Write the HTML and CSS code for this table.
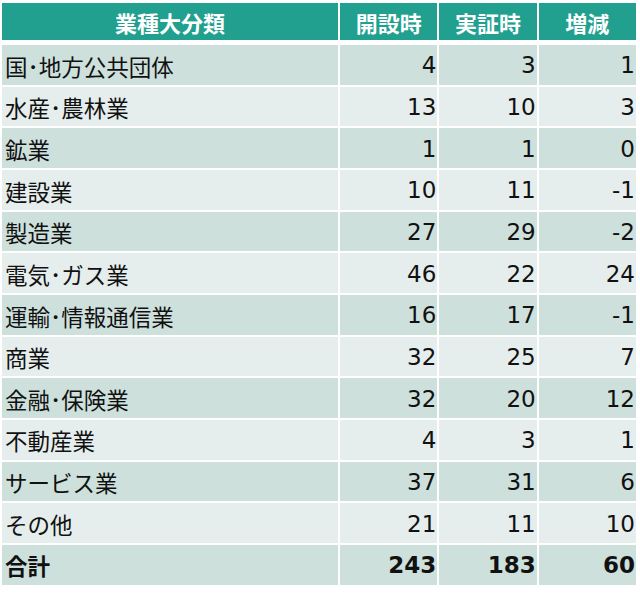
FILE: index.html
```html
<!DOCTYPE html>
<html lang="ja">
<head>
<meta charset="utf-8">
<link rel="stylesheet" href="styles.css">
</head>
<body>
<table class="tbl">
  <thead>
    <tr><th class="c1">業種大分類</th><th class="cn">開設時</th><th class="cn">実証時</th><th class="cn">増減</th></tr>
  </thead>
  <tbody>
    <tr class="odd"><td class="name">国･地方公共団体</td><td class="num">4</td><td class="num">3</td><td class="num">1</td></tr>
    <tr class="even"><td class="name">水産･農林業</td><td class="num">13</td><td class="num">10</td><td class="num">3</td></tr>
    <tr class="odd"><td class="name">鉱業</td><td class="num">1</td><td class="num">1</td><td class="num">0</td></tr>
    <tr class="even"><td class="name">建設業</td><td class="num">10</td><td class="num">11</td><td class="num">-1</td></tr>
    <tr class="odd"><td class="name">製造業</td><td class="num">27</td><td class="num">29</td><td class="num">-2</td></tr>
    <tr class="even"><td class="name">電気･ガス業</td><td class="num">46</td><td class="num">22</td><td class="num">24</td></tr>
    <tr class="odd"><td class="name">運輸･情報通信業</td><td class="num">16</td><td class="num">17</td><td class="num">-1</td></tr>
    <tr class="even"><td class="name">商業</td><td class="num">32</td><td class="num">25</td><td class="num">7</td></tr>
    <tr class="odd"><td class="name">金融･保険業</td><td class="num">32</td><td class="num">20</td><td class="num">12</td></tr>
    <tr class="even"><td class="name">不動産業</td><td class="num">4</td><td class="num">3</td><td class="num">1</td></tr>
    <tr class="odd"><td class="name">サービス業</td><td class="num">37</td><td class="num">31</td><td class="num">6</td></tr>
    <tr class="even"><td class="name">その他</td><td class="num">21</td><td class="num">11</td><td class="num">10</td></tr>
    <tr class="odd total"><td class="name">合計</td><td class="num">243</td><td class="num">183</td><td class="num">60</td></tr>
  </tbody>
</table>
</body>
</html>
```
FILE: styles.css
```css
html, body {
  margin: 0;
  padding: 0;
  background: #ffffff;
}
body {
  padding: 1px 0 0 0;
  font-family: "DejaVu Sans", "Noto Sans CJK JP", sans-serif;
  color: #111111;
}
.tbl {
  border-collapse: separate;
  border-spacing: 2px;
  width: 638px;
  table-layout: fixed;
}
.tbl th {
  background: #21a08f;
  color: #ffffff;
  font-family: "Noto Sans CJK JP", sans-serif;
  font-weight: 700;
  font-size: 22px;
  height: 37px;
  padding: 0;
  line-height: 1;
  text-align: center;
}
.tbl tbody tr:first-child td {
  border-top: 3px solid #ffffff;
}
.tbl .c1 { width: 335px; }
.tbl .cn { width: 97px; }
.tbl td {
  height: 37.67px;
  padding: 2px 0 0 0;
  font-size: 23px;
  line-height: 1;
}
.tbl tr.odd td { background: #cde0dc; }
.tbl tr.even td { background: #e6eeed; }
.tbl td.name {
  font-family: "Noto Sans CJK JP", sans-serif;
  font-size: 22.5px;
  padding-left: 3px;
  text-align: left;
}
.tbl td.num {
  text-align: right;
  padding-right: 1px;
}
.tbl tr.total td {
  font-weight: 700;
}
```
